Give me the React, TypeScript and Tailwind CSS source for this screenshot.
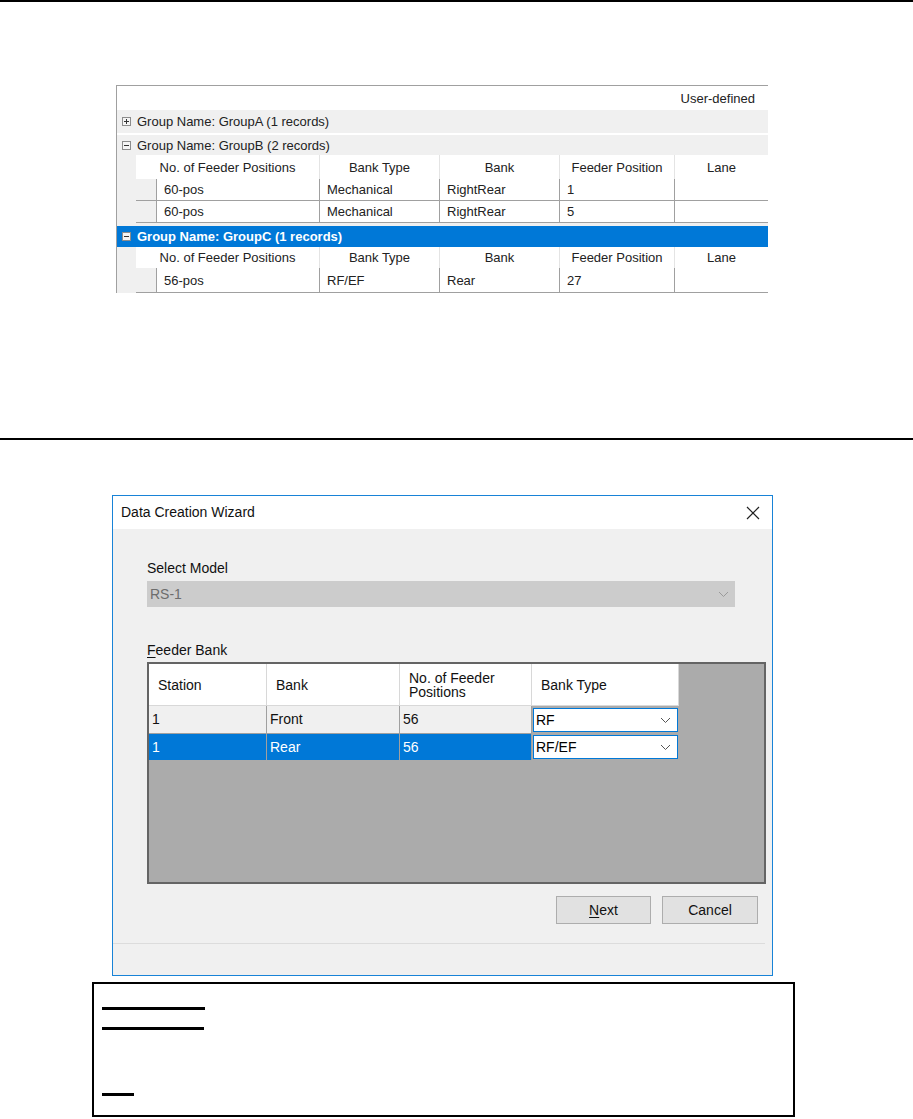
import React from 'react';

const FONT = { fontFamily: '"Liberation Sans", "Noto Sans CJK JP", sans-serif' };

const COLS = [
  { label: 'No. of Feeder Positions', w: 'w-[183px]' },
  { label: 'Bank Type', w: 'w-[120px]' },
  { label: 'Bank', w: 'w-[120px]' },
  { label: 'Feeder Position', w: 'w-[115px]' },
  { label: 'Lane', w: 'flex-1' },
];

const groupB = [
  ['60-pos', 'Mechanical', 'RightRear', '1', ''],
  ['60-pos', 'Mechanical', 'RightRear', '5', ''],
];
const groupC = [['56-pos', 'RF/EF', 'Rear', '27', '']];

const ExpandBox: React.FC<{ open: boolean }> = ({ open }) => (
  <span className="relative inline-block w-[9px] h-[9px] border border-[#8c8c8c] bg-[#f4f4f4] mr-[6px] shrink-0">
    <span className="absolute left-[1px] right-[1px] top-[3px] h-px bg-[#333]" />
    {!open && <span className="absolute top-[1px] bottom-[1px] left-[3px] w-px bg-[#333]" />}
  </span>
);

const GroupRow: React.FC<{ label: string; open: boolean; selected?: boolean; h: string }> = ({ label, open, selected, h }) => (
  <div
    className={`flex items-center pl-[5px] ${h} ${
      selected ? 'bg-[#0078d7] text-white font-bold' : 'bg-[#f0f0f0] text-[#222]'
    }`}
  >
    <ExpandBox open={open} />
    <span>{label}</span>
  </div>
);

const DetailTable: React.FC<{ rows: string[][]; headH: string; rowH: string }> = ({ rows, headH, rowH }) => (
  <div className="flex">
    <div className="w-[19px] bg-[#f0f0f0]" />
    <div className="flex-1 bg-white text-[#222]">
      <div className={`flex ${headH}`}>
        {COLS.map((c, i) => (
          <div
            key={c.label}
            className={`${c.w} flex items-center justify-center ${i > 0 ? 'border-l border-[#e4e4e4]' : ''}`}
          >
            {c.label}
          </div>
        ))}
      </div>
      {rows.map((r, ri) => (
        <div key={ri} className={`flex ${rowH} border-b border-[#a0a0a0]`}>
          <div className="w-[21px] bg-[#f0f0f0] border-r border-[#a0a0a0]" />
          {r.map((v, i) => (
            <div
              key={i}
              className={`${i === 0 ? 'w-[162px]' : COLS[i].w} flex items-center pl-[7px] ${
                i > 0 ? 'border-l border-[#a0a0a0]' : ''
              }`}
            >
              {v}
            </div>
          ))}
        </div>
      ))}
    </div>
  </div>
);

const Chevron: React.FC<{ color: string }> = ({ color }) => (
  <svg width="11" height="7" viewBox="0 0 11 7" fill="none">
    <path d="M1 1 L5.5 5.5 L10 1" stroke={color} strokeWidth="1" />
  </svg>
);

const wizardCols = ['w-[118px]', 'w-[133px]', 'w-[132px]', 'w-[147px]'];

const BankCombo: React.FC<{ value: string; h: string }> = ({ value, h }) => (
  <div className={`w-[147px] ${h} px-[1px] flex items-center`}>
    <div className="flex-1 h-[24px] bg-white border border-[#0078d7] flex items-center justify-between pl-[2px] pr-[6px] text-black">
      <span>{value}</span>
      <Chevron color="#555" />
    </div>
  </div>
);

export default function App() {
  return (
    <div className="w-[913px] h-[1119px] bg-white overflow-hidden" style={FONT}>
      <div className="h-[2px] bg-black" />

      {/* upper grid screenshot */}
      <div className="ml-[116px] mt-[83px] w-[652px] border-l border-t border-[#a0a0a0] text-[13px] leading-none">
        <div className="h-[24px] flex items-center justify-end pr-[13px] text-[#222]">User-defined</div>
        <GroupRow label="Group Name: GroupA (1 records)" open={false} h="h-[23px]" />
        <div className="h-[2px] bg-white" />
        <GroupRow label="Group Name: GroupB (2 records)" open h="h-[20px]" />
        <DetailTable rows={groupB} headH="h-[24px]" rowH="h-[22px]" />
        <div className="h-[3px] bg-[#f0f0f0]" />
        <GroupRow label="Group Name: GroupC (1 records)" open selected h="h-[21px]" />
        <DetailTable rows={groupC} headH="h-[21px]" rowH="h-[25px]" />
      </div>

      <div className="mt-[145px] h-[2px] bg-black" />

      {/* wizard dialog */}
      <div className="ml-[112px] mt-[55px] w-[661px] h-[481px] border border-[#1883d7] bg-[#f0f0f0] flex flex-col text-[14px] text-[#111]">
        <div className="h-[33px] bg-white flex items-center justify-between pl-[8px] pr-[12px]">
          <span>Data Creation Wizard</span>
          <svg width="14" height="14" viewBox="0 0 14 14">
            <path d="M1 1 L13 13 M13 1 L1 13" stroke="#222" strokeWidth="1.2" />
          </svg>
        </div>

        <div className="pl-[34px] pt-[32px]">
          <div className="leading-none">Select Model</div>
          <div className="mt-[6px] w-[588px] h-[26px] bg-[#cccccc] flex items-center justify-between pl-[3px] pr-[6px] text-[#6d6d6d]">
            <span>RS-1</span>
            <Chevron color="#9a9a9a" />
          </div>

          <div className="mt-[36px] leading-none">
            <span className="underline underline-offset-2">F</span>eeder Bank
          </div>
          <div className="mt-[5px] w-[619px] h-[222px] border-2 border-[#646464] bg-[#ababab]">
            <div className="flex h-[42px]">
              {['Station', 'Bank', 'No. of Feeder\nPositions', 'Bank Type'].map((t, i) => (
                <div
                  key={t}
                  className={`${wizardCols[i]} bg-white border-r border-b border-[#d8d8d8] flex items-center pl-[9px] leading-[14px] whitespace-pre-line`}
                >
                  {t}
                </div>
              ))}
            </div>
            <div className="flex">
              {['1', 'Front', '56'].map((v, i) => (
                <div
                  key={i}
                  className={`${wizardCols[i]} h-[28px] bg-[#f0f0f0] border-r border-b border-[#a0a0a0] flex items-center pl-[3px]`}
                >
                  {v}
                </div>
              ))}
              <BankCombo value="RF" h="h-[28px]" />
            </div>
            <div className="flex">
              {['1', 'Rear', '56'].map((v, i) => (
                <div
                  key={i}
                  className={`${wizardCols[i]} h-[26px] bg-[#0078d7] text-white border-r border-[#a0a0a0] flex items-center pl-[3px]`}
                >
                  {v}
                </div>
              ))}
              <BankCombo value="RF/EF" h="h-[26px]" />
            </div>
          </div>
        </div>

        <div className="flex justify-end gap-[11px] pr-[14px] mt-[12px]">
          <button className="w-[95px] h-[28px] bg-[#e1e1e1] border border-[#adadad] text-[#111]">
            <span className="underline underline-offset-2">N</span>ext
          </button>
          <button className="w-[96px] h-[28px] bg-[#e1e1e1] border border-[#adadad] text-[#111]">Cancel</button>
        </div>

        <div className="mt-[19px] mr-[7px] h-px bg-[#dcdcdc]" />
      </div>

      {/* note box */}
      <div className="ml-[92px] mt-[6px] w-[703px] h-[135px] border-2 border-black pl-[8px] pt-[23px]">
        <div className="w-[103px] h-[3px] bg-black" />
        <div className="mt-[17px] w-[102px] h-[3px] bg-black" />
        <div className="mt-[63px] w-[32px] h-[3px] bg-black" />
      </div>
    </div>
  );
}
